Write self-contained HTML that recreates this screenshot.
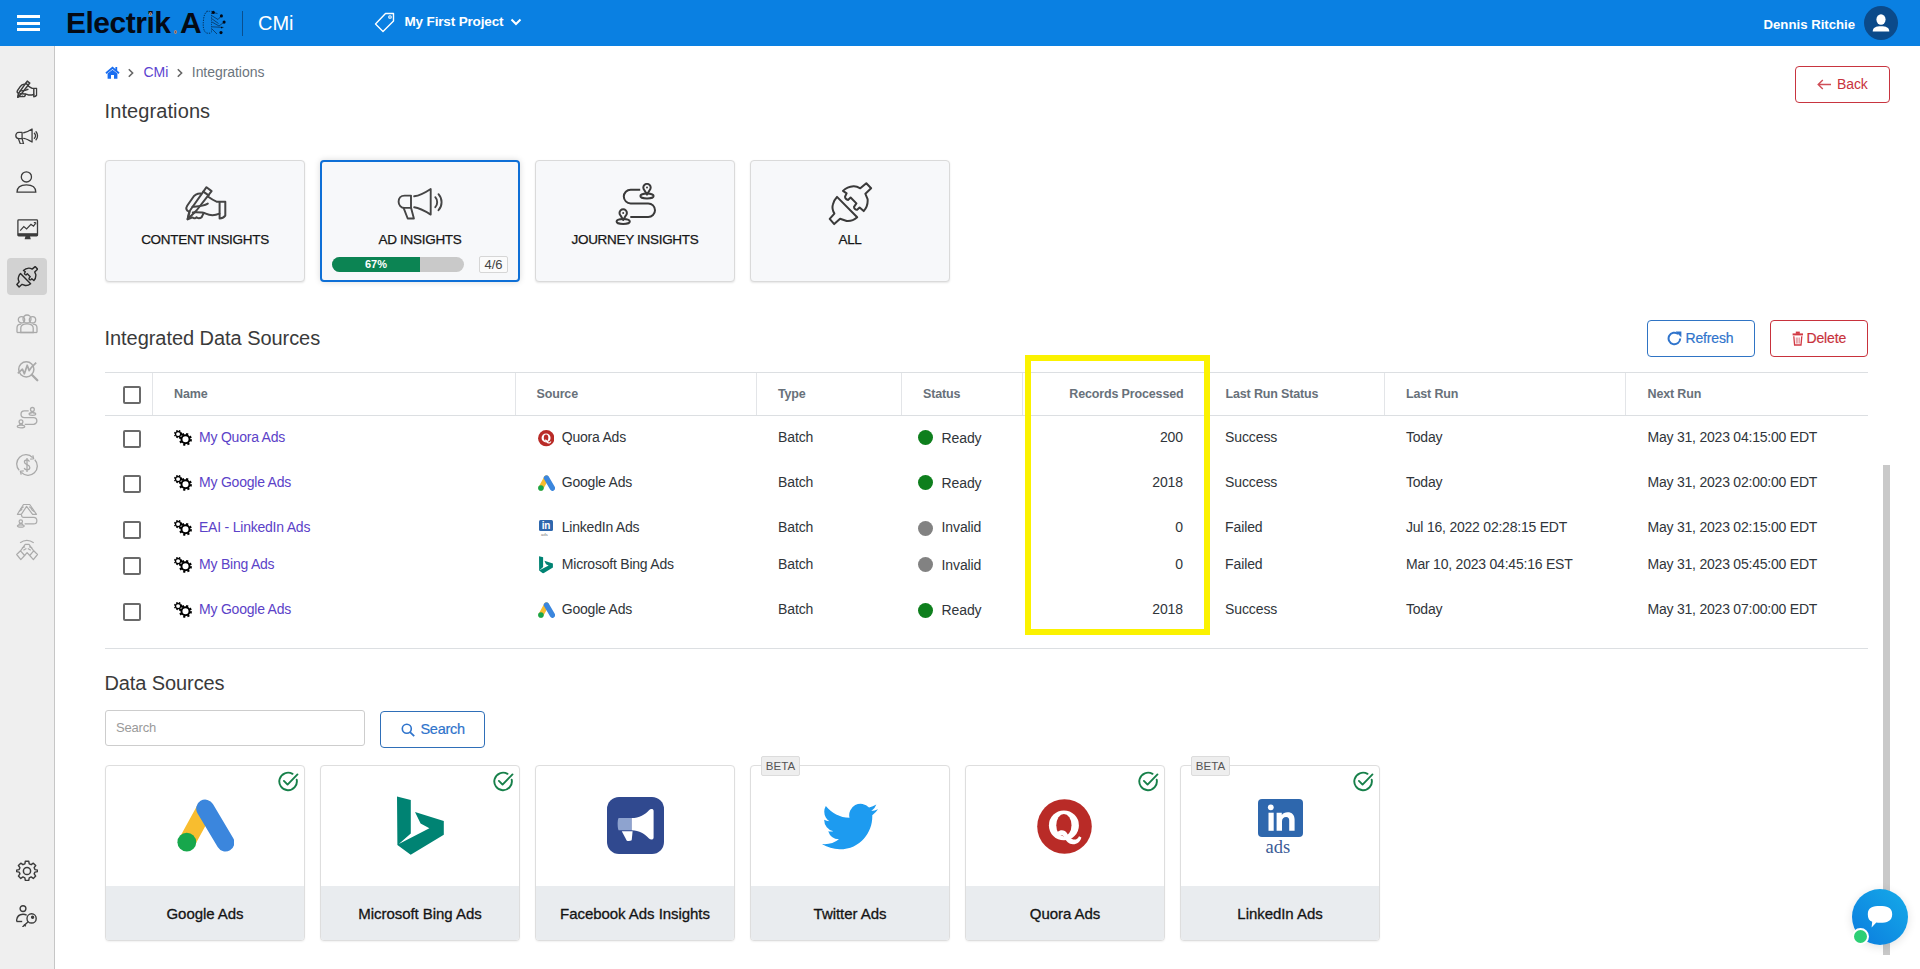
<!DOCTYPE html>
<html><head><meta charset="utf-8">
<style>
*{box-sizing:border-box;margin:0;padding:0}
html,body{width:1920px;height:969px;overflow:hidden;background:#fff;font-family:"Liberation Sans",sans-serif;color:#212529}
.a{position:absolute}
#hdr{left:0;top:0;width:1920px;height:46px;background:#0a80e2}
#side{left:0;top:46px;width:55px;height:923px;background:#efefef;border-right:1px solid #c6c6c6}
.t{position:absolute;white-space:nowrap;line-height:1}
.card{position:absolute;top:160px;width:200px;height:122px;background:#f7f8fa;border:1px solid #dcdcdc;border-radius:4px;box-shadow:0 1px 2px rgba(0,0,0,.08)}
.card .lbl{position:absolute;left:0;width:100%;text-align:center;top:73px;font-size:13px;color:#1b1b1b;letter-spacing:.1px}
.hd{position:absolute;top:372px;height:43px;}
.th{position:absolute;font-weight:bold;font-size:12.5px;color:#6c757d;top:388px;white-space:nowrap;line-height:1}
.vd{position:absolute;top:373px;width:1px;height:42px;background:#e2e2e2}
.cb{position:absolute;left:123px;width:18px;height:18px;border:2px solid #6a6a6a;border-radius:2px;background:#fff}
.td{position:absolute;font-size:14px;white-space:nowrap;line-height:1;color:#212529;letter-spacing:-.25px}
.lnk{color:#5a3fc6}
.dot{position:absolute;left:918px;width:15px;height:15px;border-radius:50%}
.ds{position:absolute;top:765px;width:200px;height:176px;border:1px solid #dedede;border-radius:4px;background:#fff;overflow:hidden;box-shadow:0 1px 2px rgba(0,0,0,.06)}
.ds .ft{position:absolute;left:0;top:120px;width:100%;height:56px;background:#e9ecef}
.ds .ft span{position:absolute;left:0;width:100%;text-align:center;top:19.8px;font-size:15px;color:#141414;line-height:1;letter-spacing:-.05px;-webkit-text-stroke:.3px #141414}
.beta{position:absolute;top:756px;height:20px;width:39px;text-align:center;background:#eeeeee;border:1px solid #dcdcdc;border-radius:2px;font-size:11.5px;color:#555;line-height:18px;letter-spacing:.1px}
</style></head><body><svg width="0" height="0" style="position:absolute">
<defs>
<symbol id="i-hand" viewBox="4 5 43 37">
<g fill="none" stroke="currentColor" style="stroke-width:calc(var(--k,1)*2px)" stroke-linejoin="round" stroke-linecap="round">
<path d="M26.5,7.2 L31.6,11.1 L16.5,30.5 L7.6,39.3 L10,30.5 Z"/>
<path d="M23.3,11.6 L28.6,15.4"/>
<path d="M28.2,16.8 C31,18.8 33.5,20.4 36.5,21.7 L45.3,21.7 L45.3,35.6 C43.8,37.5 41.5,38.4 39.6,38.4 L39.6,22"/>
<path d="M39.4,33.6 C35.5,35.3 30,35.6 25.8,33.6 C23.8,32.6 19,32.2 12.8,32.4"/>
<path d="M20.8,13.6 C17.5,13.4 14.5,15 12.4,18.2 L7.2,25.8 C5.5,28.6 6.3,30.8 9.2,31.6"/>
<path d="M12.5,26.8 C18.5,26.4 23.5,26.3 27.8,23.6"/>
<path d="M9,32.6 L7.6,39.3 L12.6,37.4 C13.6,38.6 15.6,38.6 16.4,37.2 C17.5,38.6 20,38.6 21.6,37.2 L23.4,33.6"/>
</g></symbol>
<symbol id="i-mega" viewBox="7 7 47 33">
<g fill="none" stroke="currentColor" style="stroke-width:calc(var(--k,1)*1.9px)" stroke-linejoin="round" stroke-linecap="round">
<path d="M21,15.6 L14.6,15.6 C10.6,15.6 8.6,18.5 8.6,21.7 C8.6,25 11,27.9 14.6,27.9 L21,27.9 Z"/>
<path d="M13.6,27.9 L17.7,38.5 L23.9,38.5 L21.1,27.9"/>
<path d="M24.2,16.3 C30,15.6 35,12.8 40.7,9 L40.7,34.6 C35,31 30,28 24.2,27.3"/>
<path d="M45.3,17.2 C47.8,20 47.8,24.4 45.3,27.2"/>
<path d="M48.5,14.2 C52.6,18.6 52.6,25.8 48.5,30.2"/>
</g></symbol>
<symbol id="i-journey" viewBox="10 8 42 42">
<g fill="none" stroke="currentColor" style="stroke-width:calc(var(--k,1)*2px)" stroke-linecap="butt">
<path d="M35.2,14.8 H25.6 A6.8,6.8 0 0 0 25.6,28.4 H43.2 A6.8,6.8 0 0 1 43.2,42 H25.3"/>
<path d="M42,19.6 L39.4,15.2 A3.7,3.7 0 1 1 44.6,15.2 Z" stroke-linejoin="round"/>
<ellipse cx="42" cy="21" rx="6.6" ry="2.5"/>
<path d="M18.2,45 L15.6,40.6 A3.7,3.7 0 1 1 20.8,40.6 Z" stroke-linejoin="round"/>
<ellipse cx="18.2" cy="46.4" rx="6.6" ry="2.5"/>
</g>
<circle cx="42" cy="12.6" r="1" fill="currentColor"/><circle cx="18.2" cy="38" r="1" fill="currentColor"/>
</symbol>
<symbol id="i-plug" viewBox="8 7 45 44">
<g fill="none" stroke="currentColor" style="stroke-width:calc(var(--k,1)*2px)" stroke-linejoin="round">
<path d="M17,21.9 L37.2,42.3 C33.5,45.6 30,46.3 26.7,46 L20.1,43.7 L14.2,49.1 L9.7,43.9 L14.4,38.6 C12.4,35.2 12.2,32 12.8,29.8 C13.6,26.5 15,23.8 17,21.9 Z"/>
<path d="M23,15.9 L26.6,18.4 L25.1,21.5 C24.8,23 26.5,24.9 28,24.9 L30.6,22.5 L36.4,28.4 L34,31.8 C34,33.6 35.6,35 37.1,34.8 L39.6,32.5 L43.7,36.1 C46.6,33 48,29 47.6,24.2 L45.4,18.8 L51.1,13.3 L46.3,8.2 L40.3,13.3 C37.7,11.8 35.4,11.2 33.5,11.3 C29.4,11.6 25.8,13.1 23,15.9 Z"/>
</g></symbol>
<symbol id="i-person" viewBox="0 0 22 22">
<g fill="none" stroke="currentColor" stroke-width="1.3"><circle cx="10.4" cy="5.9" r="5.1"/><path d="M1,21.2 C1,16 4.8,13.8 10.4,13.8 C16,13.8 19.8,16 19.8,21.2 Z"/></g>
</symbol>
<symbol id="i-monitor" viewBox="0 0 22 22">
<rect x="0.9" y="0.9" width="19.6" height="16" rx="0.8" fill="none" stroke="currentColor" stroke-width="1.3"/>
<rect x="0.9" y="14.2" width="19.6" height="2.8" fill="currentColor"/>
<path d="M8.5,17 L7.6,20.3 L13.8,20.3 L12.9,17 Z" fill="currentColor"/>
<path d="M3.2,11.6 L6.8,7.6 L9.6,10 L14,5.4 L16.6,7.2 L18.4,4.2" fill="none" stroke="currentColor" stroke-width="1.2"/>
<path d="M16.8,3.6 L18.8,3.4 L18.8,5.4" fill="none" stroke="currentColor" stroke-width="1"/>
</symbol>
<symbol id="i-group" viewBox="0 0 22 22">
<g fill="none" stroke="currentColor" stroke-width="1.3">
<circle cx="5.5" cy="5.8" r="3.2"/><circle cx="16.5" cy="5.8" r="3.2"/><circle cx="11" cy="5" r="4"/>
<path d="M1,18.5 L1,14 C1,11.5 2.8,10.2 5.2,10.2"/><path d="M21,18.5 L21,14 C21,11.5 19.2,10.2 16.8,10.2"/>
<path d="M4.8,18.5 L4.8,14 C4.8,11.3 7.5,9.8 11,9.8 C14.5,9.8 17.2,11.3 17.2,14 L17.2,18.5 Z"/>
<path d="M1,18.5 L21,18.5"/>
</g></symbol>
<symbol id="i-analytics" viewBox="0 0 22 22">
<g fill="none" stroke="currentColor" stroke-width="1.5" stroke-linejoin="round">
<circle cx="9.3" cy="9.3" r="7.6"/>
<path d="M14.8,14.8 L20.3,20.3" stroke-width="2.3" stroke-linecap="round"/>
<path d="M0.8,13.4 L5.4,9.2 L7.4,13.8 L10.2,5.2 L12.2,10.6 L14.2,7.6 L19.2,2.6" stroke-width="1.7"/>
</g></symbol>
<symbol id="i-dollar" viewBox="0 0 22 22">
<g fill="none" stroke="currentColor" stroke-width="1.3">
<path d="M3.2,16.2 A9,9 0 0 1 16.6,3.6"/><path d="M18.8,5.8 A9,9 0 0 1 5.4,18.4"/>
<path d="M16.8,1.4 L17.6,4.8 L14.2,5.2"/><path d="M5.2,20.6 L4.4,17.2 L7.8,16.8"/>
<path d="M13.4,7.6 C13,6.4 12,6 11,6 C9.4,6 8.4,6.9 8.4,8.1 C8.4,11 13.8,10.2 13.8,13.4 C13.8,14.8 12.6,15.8 11,15.8 C9.6,15.8 8.6,15.2 8.2,14"/>
<path d="M11,4 L11,18"/>
</g></symbol>
<symbol id="i-jhands" viewBox="0 0 22 26">
<g fill="none" stroke="currentColor" stroke-width="1.3" stroke-linejoin="round">
<path d="M2.5,12.5 L7.8,2 L11,2.2 L14.2,2 L19.5,12.5 L16.5,12.8 L13.8,7 L11,3.5 L8.2,7 L5.5,12.8 Z"/>
<path d="M6,9 L9,5 M16,9 L13,5"/>
<path d="M8.2,14.5 C5.8,15.2 6.2,18.8 9,18.8 L17.4,18.8 C20.2,18.8 20.2,23.6 17.4,23.6 L8.2,23.6"/>
<circle cx="4.3" cy="19.8" r="1.9"/><path d="M0.8,24.4 C0.8,22.4 2.2,21.8 4.3,21.8 C6.4,21.8 7.8,22.4 7.8,24.4 Z"/>
</g></symbol>
<symbol id="i-hshake" viewBox="0 0 22 22">
<g fill="none" stroke="currentColor" stroke-width="1.3" stroke-linejoin="round">
<path d="M5,2.6 C8.5,0.4 13.5,0.4 17,2.6"/>
<path d="M11,6 L7.6,4 L2.6,12.8 L1,14.6 L5.4,20.4 L7.4,18.6 L11,14"/>
<path d="M11,6 L14.4,4 L19.4,12.8 L21,14.6 L16.6,20.4 L14.6,18.6 L11,14"/>
<path d="M6,8 L9.5,6.4 M16,8 L12.5,6.4 M5,11 L8.5,9.2 M17,11 L13.5,9.2"/>
<path d="M3,15.2 L5.2,17.6 M19,15.2 L16.8,17.6"/>
</g></symbol>
<symbol id="i-gear" viewBox="0 0 22 22">
<g fill="none" stroke="currentColor" stroke-width="1.5" stroke-linejoin="round">
<path d="M9.2,1 L12.8,1 L13.3,3.7 L15.3,4.6 L17.6,3 L20.1,5.5 L18.5,7.8 L19.3,9.8 L22,10.3 L22,11.7 L22,11.9 L19.3,12.4 L18.5,14.3 L20.1,16.6 L17.6,19.1 L15.3,17.5 L13.3,18.4 L12.8,21.1 L9.2,21.1 L8.7,18.4 L6.7,17.5 L4.4,19.1 L1.9,16.6 L3.5,14.3 L2.7,12.4 L0,11.9 L0,10.3 L2.7,9.8 L3.5,7.8 L1.9,5.5 L4.4,3 L6.7,4.6 L8.7,3.7 Z" transform="translate(0.6,0.3) scale(0.95)"/>
<circle cx="11" cy="11" r="3.6"/>
</g></symbol>
<symbol id="i-ukey" viewBox="0 0 22 22">
<g fill="none" stroke="currentColor" stroke-width="1.4" stroke-linejoin="round">
<circle cx="7" cy="3.6" r="2.9"/>
<path d="M0.6,16.5 C0.6,11.5 3,9.2 7,9.2 C8.6,9.2 9.8,9.6 10.7,10.3"/>
<path d="M0.6,16.5 L6.2,16.5"/>
<circle cx="15.6" cy="13.4" r="4.6"/>
<path d="M12.4,16.6 L6.5,22"/><path d="M8,19.6 L9.8,21.2"/>
<circle cx="16.6" cy="12.2" r="1" fill="currentColor"/>
</g></symbol>
<symbol id="i-check" viewBox="0 0 22 22">
<g fill="none" stroke="currentColor" stroke-width="2" stroke-linecap="round" stroke-linejoin="round">
<path d="M19.6,9.2 A9.2,9.2 0 1 1 15.2,3"/>
<path d="M6.2,10.4 L10,14.2 L20.4,3.6"/>
</g></symbol>
<symbol id="i-gears" viewBox="0 0 20 18">
<g fill="none" stroke="#000">
<circle cx="12.5" cy="10.3" r="4.05" stroke-width="2"/>
<circle cx="12.5" cy="10.3" r="5.4" stroke-width="2.1" stroke-dasharray="2.1 2.14"/>
<circle cx="5.1" cy="5.1" r="2.6" stroke-width="1.3"/>
<circle cx="5.1" cy="5.1" r="3.5" stroke-width="1.3" stroke-dasharray="1.45 1.38"/>
</g></symbol>
<symbol id="i-gads" viewBox="0 0 57 53">
<path d="M9.8,43.2 L28.2,9.6" stroke="#f8bd2f" stroke-width="17" stroke-linecap="round" fill="none"/>
<path d="M28.2,9.6 L48.4,43.5" stroke="#3b86dd" stroke-width="18" stroke-linecap="round" fill="none"/>
<circle cx="9.8" cy="43.2" r="9.4" fill="#17a74c"/>
</symbol>
<symbol id="i-bing" viewBox="0 0 47 59">
<path d="M0,0.5 L13.8,4 L13.8,37.5 L1.8,48 L32.4,32.3 L23.6,27.6 L18,16 L46.8,24.9 L46.8,38.8 L13.7,58.7 L0.4,49 Z" fill="#008373"/>
</symbol>
<symbol id="i-quora" viewBox="0 0 55 55">
<circle cx="27.5" cy="27.5" r="27.3" fill="#b92b27"/>
<ellipse cx="26.9" cy="26.4" rx="15" ry="14.9" fill="#fff"/>
<ellipse cx="26.9" cy="26.2" rx="7.6" ry="11.2" fill="#b92b27"/>
<path d="M20.5,33.2 C23.5,30.2 28,30.8 30.2,34.6 C32,38 34,40.6 37.4,40.6 C39.6,40.6 41,39.4 42,37.2 L44.4,38.4 C43.4,42.6 40.2,45.2 36,45.2 C31.6,45.2 29.2,42.2 27.6,38.8 C26.6,36.8 25,35.4 22.2,36.2 Z" fill="#fff"/>
</symbol>
<symbol id="i-twitter" viewBox="0 2 24 20">
<path fill="#1d9bf0" d="M23.953 4.57a10 10 0 01-2.825.775 4.958 4.958 0 002.163-2.723c-.951.555-2.005.959-3.127 1.184a4.92 4.92 0 00-8.384 4.482C7.69 8.095 4.067 6.13 1.64 3.162a4.822 4.822 0 00-.666 2.475c0 1.71.87 3.213 2.188 4.096a4.904 4.904 0 01-2.228-.616v.06a4.923 4.923 0 003.946 4.827 4.996 4.996 0 01-2.212.085 4.936 4.936 0 004.604 3.417 9.867 9.867 0 01-6.102 2.105c-.39 0-.779-.023-1.17-.067a13.995 13.995 0 007.557 2.209c9.053 0 13.998-7.496 13.998-13.985 0-.21 0-.42-.015-.63A9.935 9.935 0 0024 4.59z"/>
</symbol>
<symbol id="i-fb" viewBox="0 0 57 57">
<rect x="0" y="0" width="57" height="57" rx="12" fill="#30498f"/>
<path d="M11.6,21 L24.7,21 L24.7,33.2 L11.6,33.2 C10.4,31 10.2,23.4 11.6,21 Z" fill="#8ea3cf"/>
<path d="M24.7,21 C32,21 38.5,17.5 42,13.2 C43.5,11.6 46.6,11.6 46.6,14 L46.6,40.5 C46.6,43 43.6,43.2 42,41.5 C38.5,37 32,33.4 24.7,33.2 Z" fill="#fff"/>
<path d="M14.8,34.2 L25.6,34.2 L24.7,43.3 C23.3,44.2 21,44.2 19.8,43.7 Z" fill="#fff"/>
</symbol>
</defs></svg>
<div id="hdr" class="a">
<div class="a" style="left:17px;top:15px;width:23px;height:3px;background:#fff"></div>
<div class="a" style="left:17px;top:21.5px;width:23px;height:3px;background:#fff"></div>
<div class="a" style="left:17px;top:28px;width:23px;height:3px;background:#fff"></div>
<div class="t" style="left:66px;top:7.7px;font-size:30px;font-weight:bold;color:#050a14;letter-spacing:-.5px">Electrik</div>
<div class="a" style="left:148.8px;top:12.2px;width:3.6px;height:3.6px;border-radius:50%;background:#6e5a5a;border:0.9px solid #c58f7a"></div>
<div class="a" style="left:173.8px;top:30.2px;width:3.6px;height:3.6px;border-radius:50%;background:#6e5a5a;border:0.9px solid #c58f7a"></div>
<div class="t" style="left:180px;top:7.7px;font-size:30px;font-weight:bold;color:#050a14">A</div>
<svg class="a" style="left:195px;top:5px" width="40" height="35" viewBox="0 0 40 35">
<path d="M12.5,6.2 C10,7.5 9,10.5 8.6,14 C8.2,17.5 8,20.5 8.6,23.5 C9.2,26 10.2,27.6 12,28.2 L16,28.2" fill="none" stroke="#06284a" stroke-width="0.9" stroke-dasharray="1.3 1.1"/>
<path d="M11.5,6.3 L16.5,6.3 L16.5,28" fill="none" stroke="#06315a" stroke-width="0.8" stroke-dasharray="1.2 1"/>
<g stroke="#073a6a" stroke-width="0.9" fill="none"><path d="M16.5,10.5 L23,14.5 L26.4,10.8"/><path d="M16.5,13.5 L23.5,18.5"/><path d="M17,17 L24,21 L29,17.2"/><path d="M16.8,21.8 L28.5,22.4"/><path d="M17,24 L22,29"/><path d="M18.2,7.4 L22.5,8.6"/></g>
<g fill="#020814"><circle cx="18.3" cy="7.4" r="1.55"/><circle cx="26.4" cy="10.9" r="1.55"/><circle cx="29.1" cy="17.1" r="1.55"/><circle cx="26" cy="27.6" r="1.55"/><circle cx="26.7" cy="22.6" r="0.8"/></g>
</svg>
<div class="a" style="left:242px;top:11px;width:1.2px;height:24.5px;background:#0a4f8f"></div>
<div class="t" style="left:258px;top:13.1px;font-size:20px;color:#fff">CMi</div>
<svg class="a" style="left:373px;top:11px" width="23" height="22" viewBox="0 0 23 22">
<path d="M12.5 2.5 L20.5 2.5 L20.5 10 L10 20.5 L2.5 13 Z" fill="none" stroke="#fff" stroke-width="1.4" stroke-linejoin="round"/>
<circle cx="17" cy="6" r="1.3" fill="none" stroke="#fff" stroke-width="1.1"/>
</svg>
<div class="t" style="left:404.5px;top:14.8px;font-size:13.5px;font-weight:bold;color:#fff;letter-spacing:-.15px">My First Project</div>
<svg class="a" style="left:510px;top:18px" width="12" height="8" viewBox="0 0 12 8"><path d="M1.5 1.5 L6 6 L10.5 1.5" fill="none" stroke="#fff" stroke-width="2"/></svg>
<div class="t" style="left:1763.5px;top:17.6px;font-size:13.2px;font-weight:bold;color:#fff">Dennis Ritchie</div>
<div class="a" style="left:1864px;top:6px;width:34px;height:34px;border-radius:50%;background:#0b4a8a"></div>
<svg class="a" style="left:1864px;top:6px" width="34" height="34" viewBox="0 0 34 34">
<ellipse cx="17" cy="13.5" rx="4.6" ry="5.2" fill="#fff"/>
<path d="M8.7 25.5 C8.7 21.5 12 20.2 17 20.2 C22 20.2 25.3 21.5 25.3 25.5 L8.7 25.5 Z" fill="#fff"/>
</svg>
</div><div id="side" class="a"></div>
<svg class="a" style="left:16px;top:79.7px;color:#3c3c3c;--k:1.45" width="21.5" height="18.5"><use href="#i-hand"/></svg>
<svg class="a" style="left:15.2px;top:127.6px;color:#3c3c3c;--k:1.35" width="23.8" height="16.8"><use href="#i-mega"/></svg>
<svg class="a" style="left:16.4px;top:171.2px;color:#3c3c3c;" width="22" height="22"><use href="#i-person"/></svg>
<svg class="a" style="left:16.5px;top:218.8px;color:#3c3c3c;" width="22" height="22"><use href="#i-monitor"/></svg>
<div class="a" style="left:7px;top:258px;width:40px;height:37px;border-radius:4px;background:#d2d2d2"></div>
<svg class="a" style="left:15.9px;top:266.1px;color:#2a2a2a;--k:1.4" width="22.5" height="22"><use href="#i-plug"/></svg>
<svg class="a" style="left:16px;top:313.7px;color:#a9a9a9;" width="22" height="22"><use href="#i-group"/></svg>
<svg class="a" style="left:16.5px;top:360px;color:#a9a9a9;" width="22" height="22"><use href="#i-analytics"/></svg>
<svg class="a" style="left:12px;top:402px" width="30" height="30" viewBox="0 0 30 30"><g fill="none" stroke="#ababab" stroke-width="1.3"><path d="M16.7,8.8 H12.4 A3.4,3.4 0 0 0 12.4,15.6 H21.5 A3.35,3.35 0 0 1 21.5,22.3 H12.7"/><circle cx="20.4" cy="7.4" r="1.9"/><path d="M18.6,11.6 C18.8,10.2 19.5,9.6 20.4,9.6 C21.3,9.6 22,10.2 22.2,11.6"/><ellipse cx="20.4" cy="12" rx="3.3" ry="1.3"/><circle cx="9" cy="19.8" r="1.9"/><path d="M7.2,24 C7.4,22.6 8.1,22 9,22 C9.9,22 10.6,22.6 10.8,24"/><ellipse cx="9" cy="24.5" rx="3.7" ry="1.4"/></g></svg>
<svg class="a" style="left:16.2px;top:454px;color:#a9a9a9;" width="22" height="22"><use href="#i-dollar"/></svg>
<svg class="a" style="left:14px;top:498px" width="26" height="66" viewBox="0 0 26 66"><g fill="none" stroke="#ababab" stroke-width="1.2" stroke-linejoin="round"><path d="M3.4,16.3 L9.5,6.5 L15.7,6.5 L22.5,16.3 L18.6,16.3 L12.6,8.4 L7.3,16.3 Z"/><path d="M5,13.6 L8.2,11.2 M6.6,11 L9.6,8.8 M17,11 L20,13.6 M15.2,8.6 L18.2,11.2"/><path d="M7.5,17 C7.6,18.6 8.2,19.4 9.6,19.4 H19.6 A3.25,3.25 0 0 1 19.6,25.9 H10.6"/><circle cx="6.8" cy="23.6" r="1.7"/><ellipse cx="6.8" cy="28" rx="3.4" ry="1.2"/><path d="M4.8,27 C5,25.8 5.8,25.4 6.8,25.4 C7.8,25.4 8.6,25.8 8.8,27"/><path d="M6.1,44.8 Q12.9,40 19.7,44.8" stroke-width="1.3"/><path d="M2.7,56.5 L6.5,52.8 L10.6,57.5 L6.8,61.6 Z"/><path d="M23.5,56.5 L19.7,52.8 L15.7,57.5 L19.4,61.6 Z"/><path d="M6.5,52.8 L11.2,46.3 L15,46.3 L19.7,52.8 M10.6,57.5 L13.1,54.6 L15.7,57.5"/><path d="M8,50 L11,48.6 M9.4,52.2 L12.4,50.4 M18.2,50 L15.2,48.6 M16.8,52.2 L13.8,50.4"/></g></svg>
<svg class="a" style="left:16px;top:860px;color:#3c3c3c;" width="22" height="22"><use href="#i-gear"/></svg>
<svg class="a" style="left:16.3px;top:905px;color:#3c3c3c;" width="22" height="22"><use href="#i-ukey"/></svg>
<svg class="a" style="left:104.5px;top:65.5px" width="15" height="13" viewBox="0 0 15 13">
<path d="M7.5,0.6 L0.4,6.6 L1.6,7.9 L7.5,3 L13.4,7.9 L14.6,6.6 L12.2,4.6 L12.2,1 L10.4,1 L10.4,3.1 Z" fill="#1a6ef0"/>
<path d="M2.6,7.6 L7.5,3.7 L12.4,7.6 L12.4,12.8 L9,12.8 L9,9 L6,9 L6,12.8 L2.6,12.8 Z" fill="#1a6ef0"/></svg>
<svg class="a" style="left:127px;top:68px" width="9" height="10" viewBox="0 0 9 10"><path d="M1.8,1.2 L5.6,5 L1.8,8.8" fill="none" stroke="#666" stroke-width="1.6"/></svg>
<div class="t" style="left:143.5px;top:65.35px;font-size:14px;color:#5b42cf;">CMi</div>
<svg class="a" style="left:176px;top:68px" width="9" height="10" viewBox="0 0 9 10"><path d="M1.8,1.2 L5.6,5 L1.8,8.8" fill="none" stroke="#666" stroke-width="1.6"/></svg>
<div class="t" style="left:191.8px;top:65.35px;font-size:14px;color:#6c757d;letter-spacing:-0.05px;">Integrations</div>
<div class="t" style="left:104.5px;top:101.07px;font-size:20px;color:#3a3a3a;letter-spacing:0.1px;">Integrations</div>
<div class="a" style="left:1795px;top:66px;width:95px;height:37px;border:1px solid #c83540;border-radius:4px"></div>
<svg class="a" style="left:1817px;top:78.5px" width="15" height="11" viewBox="0 0 15 11"><path d="M14,5.5 L1.5,5.5 M5.8,1 L1.2,5.5 L5.8,10" fill="none" stroke="#cf4e57" stroke-width="1.4"/></svg>
<div class="t" style="left:1837px;top:76.95px;font-size:14px;color:#c8323c;letter-spacing:-0.1px;">Back</div>
<div class="a" style="left:105px;top:160px;width:200px;height:122px;background:#f7f8fa;border:1px solid #dadada;border-radius:4px;box-shadow:0 1px 2px rgba(0,0,0,.1)"></div>
<div class="t" style="left:105px;width:200px;text-align:center;top:232.57px;font-size:13.5px;color:#161616;letter-spacing:-.3px;-webkit-text-stroke:.25px #161616">CONTENT INSIGHTS</div>
<div class="a" style="left:320px;top:160px;width:200px;height:122px;background:#f7f8fa;border:2px solid #0e6fd6;border-radius:4px;box-shadow:0 0 6px rgba(0,0,0,.15)"></div>
<div class="t" style="left:320px;width:200px;text-align:center;top:232.57px;font-size:13.5px;color:#161616;letter-spacing:-.3px;-webkit-text-stroke:.25px #161616">AD INSIGHTS</div>
<div class="a" style="left:535px;top:160px;width:200px;height:122px;background:#f7f8fa;border:1px solid #dadada;border-radius:4px;box-shadow:0 1px 2px rgba(0,0,0,.1)"></div>
<div class="t" style="left:535px;width:200px;text-align:center;top:232.57px;font-size:13.5px;color:#161616;letter-spacing:-.3px;-webkit-text-stroke:.25px #161616">JOURNEY INSIGHTS</div>
<div class="a" style="left:750px;top:160px;width:200px;height:122px;background:#f7f8fa;border:1px solid #dadada;border-radius:4px;box-shadow:0 1px 2px rgba(0,0,0,.1)"></div>
<div class="t" style="left:750px;width:200px;text-align:center;top:232.57px;font-size:13.5px;color:#161616;letter-spacing:-.3px;-webkit-text-stroke:.25px #161616">ALL</div>
<svg class="a" style="left:184px;top:185px;color:#454545;" width="43" height="37"><use href="#i-hand"/></svg>
<svg class="a" style="left:397px;top:187px;color:#454545;" width="47" height="33"><use href="#i-mega"/></svg>
<svg class="a" style="left:615px;top:183px;color:#3a3a3a;" width="42" height="42"><use href="#i-journey"/></svg>
<svg class="a" style="left:828px;top:182px;color:#3a3a3a;" width="45" height="44"><use href="#i-plug"/></svg>
<div class="a" style="left:332px;top:257px;width:132px;height:15px;border-radius:7.5px;background:#c9c9c9;overflow:hidden"><div style="width:88px;height:15px;background:#0c8453"></div></div>
<div class="t" style="left:332px;width:88px;text-align:center;top:259.19px;font-size:11px;font-weight:bold;color:#fff">67%</div>
<div class="a" style="left:479px;top:255.5px;width:29px;height:17px;border:1px solid #d6d6d6;border-radius:2px;background:#fbfbfb"></div>
<div class="t" style="left:479px;width:29px;text-align:center;top:258.00px;font-size:13px;color:#444">4/6</div>
<div class="t" style="left:104.5px;top:328.27px;font-size:20px;color:#3a3a3a;letter-spacing:-0.05px;">Integrated Data Sources</div>
<div class="a" style="left:1647px;top:320px;width:108px;height:37px;border:1px solid #2f74c4;border-radius:4px"></div>
<svg class="a" style="left:1667px;top:330.5px" width="16" height="15" viewBox="0 0 16 15">
<path d="M13.2,7.5 A5.8,5.8 0 1 1 11.2,3.1" fill="none" stroke="#2f74cc" stroke-width="2"/>
<path d="M8.6,0.6 L14.4,0.6 L14.4,6.4 Z" fill="#2f74cc"/></svg>
<div class="t" style="left:1685.5px;top:331.15px;font-size:14px;color:#2f74cc;letter-spacing:-0.15px;-webkit-text-stroke:.2px #2f74cc;">Refresh</div>
<div class="a" style="left:1770px;top:320px;width:98px;height:37px;border:1px solid #c8323c;border-radius:4px"></div>
<svg class="a" style="left:1792px;top:330.5px" width="12" height="15" viewBox="0 0 12 15">
<rect x="0.6" y="2.4" width="10.4" height="2" fill="#d23a44"/><rect x="3.8" y="0.6" width="4" height="2.2" fill="#d23a44"/>
<path d="M1.8,5.2 L2.6,14 L9,14 L9.8,5.2" fill="none" stroke="#d23a44" stroke-width="1.3"/>
<path d="M4.3,6.5 L4.3,12.6 M5.8,6.5 L5.8,12.6 M7.3,6.5 L7.3,12.6" stroke="#d9707a" stroke-width="0.8"/></svg>
<div class="t" style="left:1806.5px;top:331.15px;font-size:14px;color:#c8323c;letter-spacing:-0.15px;-webkit-text-stroke:.2px #c8323c;">Delete</div>
<div class="a" style="left:105px;top:372px;width:1763px;height:1px;background:#dcdfe2"></div>
<div class="a" style="left:105px;top:415px;width:1763px;height:1px;background:#dcdfe2"></div>
<div class="a" style="left:105px;top:648px;width:1763px;height:1px;background:#dcdfe2"></div>
<div class="a" style="left:152px;top:373px;width:1px;height:42px;background:#e3e5e8"></div>
<div class="a" style="left:515px;top:373px;width:1px;height:42px;background:#e3e5e8"></div>
<div class="a" style="left:756px;top:373px;width:1px;height:42px;background:#e3e5e8"></div>
<div class="a" style="left:901px;top:373px;width:1px;height:42px;background:#e3e5e8"></div>
<div class="a" style="left:1022px;top:373px;width:1px;height:42px;background:#e3e5e8"></div>
<div class="a" style="left:1205px;top:373px;width:1px;height:42px;background:#e3e5e8"></div>
<div class="a" style="left:1384px;top:373px;width:1px;height:42px;background:#e3e5e8"></div>
<div class="a" style="left:1625px;top:373px;width:1px;height:42px;background:#e3e5e8"></div>
<div class="cb" style="top:386px"></div>
<div class="t" style="left:174px;top:387.52px;font-size:12.5px;color:#68717a;font-weight:bold;letter-spacing:-0.15px;">Name</div>
<div class="t" style="left:536.5px;top:387.52px;font-size:12.5px;color:#68717a;font-weight:bold;letter-spacing:-0.15px;">Source</div>
<div class="t" style="left:778px;top:387.52px;font-size:12.5px;color:#68717a;font-weight:bold;letter-spacing:-0.15px;">Type</div>
<div class="t" style="left:923px;top:387.52px;font-size:12.5px;color:#68717a;font-weight:bold;letter-spacing:-0.15px;">Status</div>
<div class="t" style="left:1225.5px;top:387.52px;font-size:12.5px;color:#68717a;font-weight:bold;letter-spacing:-0.15px;">Last Run Status</div>
<div class="t" style="left:1406px;top:387.52px;font-size:12.5px;color:#68717a;font-weight:bold;letter-spacing:-0.15px;">Last Run</div>
<div class="t" style="left:1647.5px;top:387.52px;font-size:12.5px;color:#68717a;font-weight:bold;letter-spacing:-0.15px;">Next Run</div>
<div class="t" style="right:736.5px;top:387.52px;font-size:12.5px;color:#68717a;font-weight:bold;letter-spacing:-0.15px;">Records Processed</div>
<div class="cb" style="top:430.1px"></div>
<svg class="a" style="left:173px;top:429.0px;color:#444;" width="20" height="18"><use href="#i-gears"/></svg>
<div class="t" style="left:199px;top:429.95px;font-size:14px;color:#5b42c8;letter-spacing:-0.22px;">My Quora Ads</div>
<svg class="a" style="left:537.8px;top:430.0px" width="16.5" height="16.5"><use href="#i-quora"/></svg>
<div class="t" style="left:561.8px;top:429.95px;font-size:14px;color:#30353a;letter-spacing:-0.22px;">Quora Ads</div>
<div class="t" style="left:778px;top:429.95px;font-size:14px;color:#30353a;letter-spacing:-0.1px;">Batch</div>
<div class="dot" style="top:430.2px;background:#0e7f1d"></div>
<div class="t" style="left:941.5px;top:430.55px;font-size:14px;color:#30353a;letter-spacing:-0.1px;">Ready</div>
<div class="t" style="right:737px;top:429.95px;font-size:14px;color:#30353a;letter-spacing:-0.1px;">200</div>
<div class="t" style="left:1225px;top:429.95px;font-size:14px;color:#30353a;letter-spacing:-0.1px;">Success</div>
<div class="t" style="left:1406px;top:429.95px;font-size:14px;color:#30353a;letter-spacing:-0.22px;">Today</div>
<div class="t" style="left:1647.5px;top:429.95px;font-size:14px;color:#30353a;letter-spacing:-0.22px;">May 31, 2023 04:15:00 EDT</div>
<div class="cb" style="top:475.3px"></div>
<svg class="a" style="left:173px;top:474.2px;color:#444;" width="20" height="18"><use href="#i-gears"/></svg>
<div class="t" style="left:199px;top:474.95px;font-size:14px;color:#5b42c8;letter-spacing:-0.22px;">My Google Ads</div>
<svg class="a" style="left:537.5px;top:474.6px" width="17" height="16"><use href="#i-gads"/></svg>
<div class="t" style="left:561.8px;top:474.95px;font-size:14px;color:#30353a;letter-spacing:-0.22px;">Google Ads</div>
<div class="t" style="left:778px;top:474.95px;font-size:14px;color:#30353a;letter-spacing:-0.1px;">Batch</div>
<div class="dot" style="top:475.4px;background:#0e7f1d"></div>
<div class="t" style="left:941.5px;top:475.55px;font-size:14px;color:#30353a;letter-spacing:-0.1px;">Ready</div>
<div class="t" style="right:737px;top:474.95px;font-size:14px;color:#30353a;letter-spacing:-0.1px;">2018</div>
<div class="t" style="left:1225px;top:474.95px;font-size:14px;color:#30353a;letter-spacing:-0.1px;">Success</div>
<div class="t" style="left:1406px;top:474.95px;font-size:14px;color:#30353a;letter-spacing:-0.22px;">Today</div>
<div class="t" style="left:1647.5px;top:474.95px;font-size:14px;color:#30353a;letter-spacing:-0.22px;">May 31, 2023 02:00:00 EDT</div>
<div class="cb" style="top:520.5px"></div>
<svg class="a" style="left:173px;top:519.4px;color:#444;" width="20" height="18"><use href="#i-gears"/></svg>
<div class="t" style="left:199px;top:519.85px;font-size:14px;color:#5b42c8;letter-spacing:-0.22px;">EAI - LinkedIn Ads</div>
<div class="a" style="left:539px;top:519.8px;width:14px;height:11.5px;background:#2e67ad;border-radius:1.5px;color:#fff;font-weight:bold;font-size:10px;line-height:12px;text-align:center;letter-spacing:-.3px">in</div>
<div class="t" style="left:541px;top:532.4px;font-size:5px;color:#777;font-family:Liberation Serif">ads</div>
<div class="t" style="left:561.8px;top:519.85px;font-size:14px;color:#30353a;letter-spacing:-0.22px;">LinkedIn Ads</div>
<div class="t" style="left:778px;top:519.85px;font-size:14px;color:#30353a;letter-spacing:-0.1px;">Batch</div>
<div class="dot" style="top:520.6px;background:#828282"></div>
<div class="t" style="left:941.5px;top:520.45px;font-size:14px;color:#30353a;letter-spacing:-0.1px;">Invalid</div>
<div class="t" style="right:737px;top:519.85px;font-size:14px;color:#30353a;letter-spacing:-0.1px;">0</div>
<div class="t" style="left:1225px;top:519.85px;font-size:14px;color:#30353a;letter-spacing:-0.1px;">Failed</div>
<div class="t" style="left:1406px;top:519.85px;font-size:14px;color:#30353a;letter-spacing:-0.22px;">Jul 16, 2022 02:28:15 EDT</div>
<div class="t" style="left:1647.5px;top:519.85px;font-size:14px;color:#30353a;letter-spacing:-0.22px;">May 31, 2023 02:15:00 EDT</div>
<div class="cb" style="top:557.1px"></div>
<svg class="a" style="left:173px;top:556.0px;color:#444;" width="20" height="18"><use href="#i-gears"/></svg>
<div class="t" style="left:199px;top:557.25px;font-size:14px;color:#5b42c8;letter-spacing:-0.22px;">My Bing Ads</div>
<svg class="a" style="left:539px;top:556.2px" width="14" height="17.5"><use href="#i-bing"/></svg>
<div class="t" style="left:561.8px;top:557.25px;font-size:14px;color:#30353a;letter-spacing:-0.22px;">Microsoft Bing Ads</div>
<div class="t" style="left:778px;top:557.25px;font-size:14px;color:#30353a;letter-spacing:-0.1px;">Batch</div>
<div class="dot" style="top:557.2px;background:#828282"></div>
<div class="t" style="left:941.5px;top:557.85px;font-size:14px;color:#30353a;letter-spacing:-0.1px;">Invalid</div>
<div class="t" style="right:737px;top:557.25px;font-size:14px;color:#30353a;letter-spacing:-0.1px;">0</div>
<div class="t" style="left:1225px;top:557.25px;font-size:14px;color:#30353a;letter-spacing:-0.1px;">Failed</div>
<div class="t" style="left:1406px;top:557.25px;font-size:14px;color:#30353a;letter-spacing:-0.22px;">Mar 10, 2023 04:45:16 EST</div>
<div class="t" style="left:1647.5px;top:557.25px;font-size:14px;color:#30353a;letter-spacing:-0.22px;">May 31, 2023 05:45:00 EDT</div>
<div class="cb" style="top:602.5px"></div>
<svg class="a" style="left:173px;top:601.4px;color:#444;" width="20" height="18"><use href="#i-gears"/></svg>
<div class="t" style="left:199px;top:602.25px;font-size:14px;color:#5b42c8;letter-spacing:-0.22px;">My Google Ads</div>
<svg class="a" style="left:537.5px;top:601.8px" width="17" height="16"><use href="#i-gads"/></svg>
<div class="t" style="left:561.8px;top:602.25px;font-size:14px;color:#30353a;letter-spacing:-0.22px;">Google Ads</div>
<div class="t" style="left:778px;top:602.25px;font-size:14px;color:#30353a;letter-spacing:-0.1px;">Batch</div>
<div class="dot" style="top:602.6px;background:#0e7f1d"></div>
<div class="t" style="left:941.5px;top:602.85px;font-size:14px;color:#30353a;letter-spacing:-0.1px;">Ready</div>
<div class="t" style="right:737px;top:602.25px;font-size:14px;color:#30353a;letter-spacing:-0.1px;">2018</div>
<div class="t" style="left:1225px;top:602.25px;font-size:14px;color:#30353a;letter-spacing:-0.1px;">Success</div>
<div class="t" style="left:1406px;top:602.25px;font-size:14px;color:#30353a;letter-spacing:-0.22px;">Today</div>
<div class="t" style="left:1647.5px;top:602.25px;font-size:14px;color:#30353a;letter-spacing:-0.22px;">May 31, 2023 07:00:00 EDT</div>
<div class="a" style="left:1025px;top:355px;width:185px;height:280px;border:6px solid #fbf200"></div>
<div class="t" style="left:104.5px;top:673.07px;font-size:20px;color:#3a3a3a;letter-spacing:-0.1px;">Data Sources</div>
<div class="a" style="left:105px;top:710px;width:260px;height:35.5px;border:1px solid #cdcdcd;border-radius:3px;background:#fff"></div>
<div class="t" style="left:116px;top:721.00px;font-size:13px;color:#9a9a9a;letter-spacing:-0.2px;">Search</div>
<div class="a" style="left:380px;top:711px;width:105px;height:37px;border:1.5px solid #2f6fb8;border-radius:4px"></div>
<svg class="a" style="left:400.5px;top:723px" width="15" height="14" viewBox="0 0 15 14"><circle cx="5.8" cy="5.8" r="4.5" fill="none" stroke="#2f74cc" stroke-width="1.6"/><path d="M9,9.2 L13.2,13.2" stroke="#2f74cc" stroke-width="1.8"/></svg>
<div class="t" style="left:420.5px;top:721.93px;font-size:14.5px;color:#2f74cc;letter-spacing:-0.3px;-webkit-text-stroke:.2px #2f74cc;">Search</div>
<div class="ds" style="left:105px"><div class="ft"><span>Google Ads</span></div></div>
<svg class="a" style="left:277.5px;top:771px;color:#17804a;" width="21" height="21"><use href="#i-check"/></svg>
<svg class="a" style="left:176.5px;top:798.5px" width="57" height="53"><use href="#i-gads"/></svg>
<div class="ds" style="left:320px"><div class="ft"><span>Microsoft Bing Ads</span></div></div>
<svg class="a" style="left:492.5px;top:771px;color:#17804a;" width="21" height="21"><use href="#i-check"/></svg>
<svg class="a" style="left:397px;top:796.2px" width="47" height="59"><use href="#i-bing"/></svg>
<div class="ds" style="left:535px"><div class="ft"><span>Facebook Ads Insights</span></div></div>
<svg class="a" style="left:607px;top:797px" width="57" height="57"><use href="#i-fb"/></svg>
<div class="ds" style="left:750px"><div class="ft"><span>Twitter Ads</span></div></div>
<div class="beta" style="left:761px">BETA</div>
<svg class="a" style="left:822.3px;top:802.6px" width="56" height="47"><use href="#i-twitter"/></svg>
<div class="ds" style="left:965px"><div class="ft"><span>Quora Ads</span></div></div>
<svg class="a" style="left:1137.5px;top:771px;color:#17804a;" width="21" height="21"><use href="#i-check"/></svg>
<svg class="a" style="left:1037.2px;top:799px" width="55" height="55"><use href="#i-quora"/></svg>
<div class="ds" style="left:1180px"><div class="ft"><span>LinkedIn Ads</span></div></div>
<svg class="a" style="left:1352.5px;top:771px;color:#17804a;" width="21" height="21"><use href="#i-check"/></svg>
<div class="beta" style="left:1191px">BETA</div>
<div class="a" style="left:1257.5px;top:798.7px;width:45px;height:38px;border-radius:4px;background:#2e67ad"></div>
<svg class="a" style="left:1257.5px;top:798.7px" width="45" height="38" viewBox="0 0 45 38"><circle cx="12.8" cy="8.3" r="2.9" fill="#fff"/><rect x="10.5" y="13.7" width="5.2" height="18.1" fill="#fff"/><path d="M18.6,31.8 L18.6,13.7 L23.8,13.7 L23.8,16 C25,14.2 27,13.2 29.6,13.2 C34,13.2 36.6,15.8 36.6,20.6 L36.6,31.8 L31.2,31.8 L31.2,21.6 C31.2,19.2 30.2,18 28.2,18 C25.6,18 24,19.6 24,22.4 L24,31.8 Z" fill="#fff"/></svg>
<div class="t" style="left:1265.5px;top:838.2px;font-size:18.5px;color:#3b5b96;font-family:'Liberation Serif',serif">ads</div>
<div class="a" style="left:1883px;top:465px;width:7px;height:490px;background:#c9c9c9"></div>
<div class="a" style="left:1852px;top:889px;width:56px;height:56px;border-radius:50%;background:linear-gradient(45deg,#0b7bde,#15abe9);box-shadow:0 2px 10px rgba(0,0,0,.12)"></div>
<svg class="a" style="left:1866px;top:904px" width="28" height="26" viewBox="0 0 28 26"><path d="M13.8,2 C20.5,2 26.2,3.2 26.2,10.2 C26.2,17 21,18.8 14.2,18.8 C12.6,18.8 11.4,18.7 10.3,18.5 L5.6,23.6 L6.2,17.8 C3.2,16.6 1.8,14.4 1.8,10.2 C1.8,3.2 7.2,2 13.8,2 Z" fill="#fff"/></svg>
<div class="a" style="left:1852px;top:928px;width:17px;height:17px;border-radius:50%;background:#2dcf75;border:2.5px solid #fff"></div></body></html>
